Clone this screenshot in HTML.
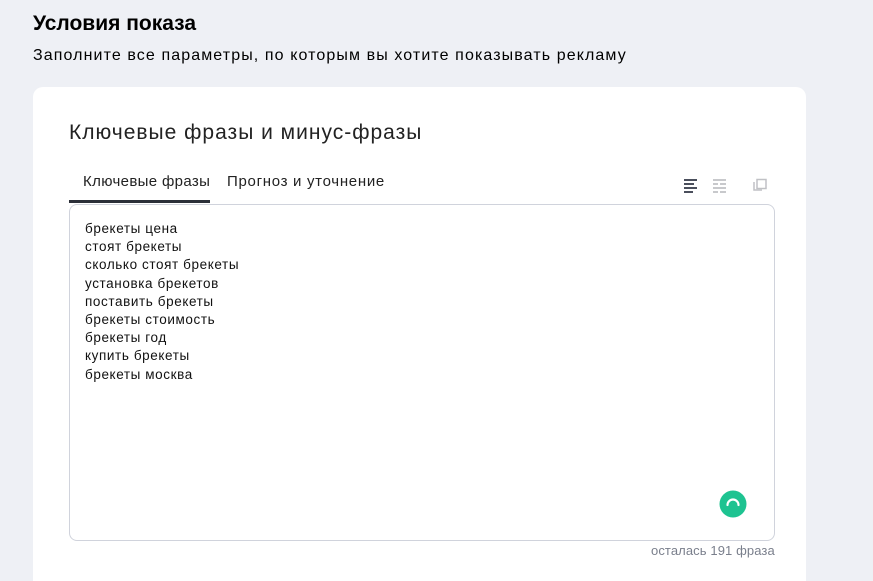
<!DOCTYPE html>
<html style="overflow:hidden;height:581px"><head><meta charset="utf-8"><style>
body{margin:0;width:873px;height:581px;background:#eef0f5;font-family:"Liberation Sans",sans-serif;position:relative;overflow:hidden;color:#000}
.a{position:absolute}
</style></head><body>
<div class="a" style="left:33px;top:12px;font-size:21px;font-weight:bold;">Условия показа</div>
<div class="a" style="left:33px;top:47px;font-size:16px;letter-spacing:1.1px">Заполните все параметры, по которым вы хотите показывать рекламу</div>
<div class="a" style="left:33px;top:87px;width:773px;height:494px;background:#fff;border-radius:10px 10px 0 0"></div>
<div class="a" style="left:69px;top:121px;font-size:21px;color:#222;letter-spacing:1px">Ключевые фразы и минус-фразы</div>
<div class="a" style="left:83px;top:173px;font-size:15px;color:#222;letter-spacing:0.35px">Ключевые фразы</div>
<div class="a" style="left:69px;top:200px;width:141px;height:3px;background:#2b2f38"></div>
<div class="a" style="left:227px;top:173px;font-size:15px;color:#222;letter-spacing:0.7px">Прогноз и уточнение</div>
<svg class="a" style="left:683px;top:178px" width="90" height="16">
<g fill="#4a4f5c"><rect x="1" y="1" width="13" height="2"/><rect x="1" y="5" width="10" height="2"/><rect x="1" y="9" width="13" height="2"/><rect x="1" y="13" width="9" height="2"/></g>
<g fill="#c8c9cc"><rect x="30" y="1" width="13" height="2"/><rect x="30" y="5" width="5" height="2"/><rect x="37" y="5" width="6" height="2"/><rect x="30" y="9" width="13" height="2"/><rect x="30" y="13" width="5" height="2"/><rect x="37" y="13" width="6" height="2"/></g>
<g fill="none" stroke="#c0c1c5" stroke-width="1.5"><rect x="74" y="1.5" width="9" height="9"/><path d="M71 4v8h8"/></g>
</svg>
<div class="a" style="left:69px;top:204px;width:704px;height:335px;border:1px solid #d0d3dc;border-radius:8px"></div>
<div class="a" style="left:85px;top:220px;font-size:13.5px;line-height:18.2px;color:#111;letter-spacing:0.6px">брекеты цена<br>стоят брекеты<br>сколько стоят брекеты<br>установка брекетов<br>поставить брекеты<br>брекеты стоимость<br>брекеты год<br>купить брекеты<br>брекеты москва</div>
<svg class="a" style="left:719px;top:490px" width="28" height="28"><circle cx="14" cy="14" r="13.5" fill="#1ec391"/><path d="M8.5 15a5.5 5.5 0 0 1 11 0" fill="none" stroke="#fff" stroke-width="2.2" stroke-linecap="round"/></svg>
<div class="a" style="left:651px;top:543px;font-size:13px;color:#7a7f8c;letter-spacing:0.1px">осталась 191 фраза</div>
</body></html>
